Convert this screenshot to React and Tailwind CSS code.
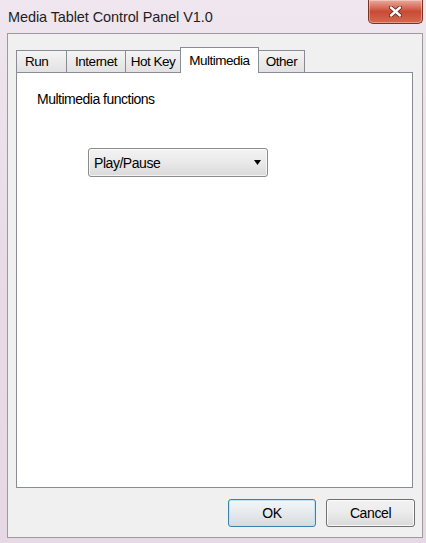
import { useState } from 'react';

const TABS = [
  { id: 'run', label: 'Run', w: 'w-[51px]', pad: 'justify-start pl-[8px]' },
  { id: 'internet', label: 'Internet', w: 'w-[60px]', pad: 'justify-center' },
  { id: 'hotkey', label: 'Hot Key', w: 'w-[56px]', pad: 'justify-center' },
  { id: 'multimedia', label: 'Multimedia', w: 'w-[79px]', pad: 'justify-center' },
  { id: 'other', label: 'Other', w: 'w-[47px]', pad: 'justify-center' },
];

// Botón cerrar estilo Aero
function CloseButton() {
  return (
    <button className="ml-auto mr-[3px] w-[55px] h-[24px] rounded-b-[5px] border border-t-0 border-[#7a3126]
      bg-gradient-to-b from-[#eba99a] via-[#c94a35] to-[#d5694f] flex items-start justify-center pt-[6px]
      shadow-[inset_0_0_0_1px_rgba(255,255,255,0.35)]">
      <svg width="13" height="11" viewBox="0 0 13 11">
        <path d="M2 1.5 L11 9.5 M11 1.5 L2 9.5" stroke="#5a1f17" strokeWidth="4" strokeLinecap="round" />
        <path d="M2 1.5 L11 9.5 M11 1.5 L2 9.5" stroke="#ffffff" strokeWidth="2.4" strokeLinecap="round" />
      </svg>
    </button>
  );
}

function Tab({ tab, activo, onClick }) {
  return (
    <div onClick={onClick}
      className={`${tab.w} ${tab.pad} flex items-center border border-b-0 border-[#898c95] -ml-px first:ml-0 cursor-default
        ${activo
          ? 'h-[26px] -mb-px bg-white relative z-10'
          : 'h-[22px] bg-gradient-to-b from-[#f4f4f4] to-[#e2e2e2]'}`}>
      <span className="text-[13.5px] leading-[16px] tracking-[-0.5px] text-black">{tab.label}</span>
    </div>
  );
}

function Combo({ valor }) {
  return (
    <div className="w-[180px] h-[29px] rounded-[3px] border border-[#8a8a8a] flex items-center pl-[5px] pr-[6px]
      bg-gradient-to-b from-[#f3f3f3] via-[#e9e9e9] to-[#dadada] shadow-[inset_0_0_0_1px_rgba(255,255,255,0.7)]">
      <span className="flex-1 text-[14px] leading-[16px] tracking-[-0.45px] text-black">{valor}</span>
      <svg width="7" height="5" viewBox="0 0 7 5">
        <path d="M0 0 H7 L3.5 5 Z" fill="#000" />
      </svg>
    </div>
  );
}

export default function App() {
  const [tabActiva, setTabActiva] = useState('multimedia');

  return (
    <div className="w-[426px] h-[543px] flex flex-col overflow-hidden bg-gradient-to-b from-[#efe6ef] via-[#e8dbe7] to-[#e6d8e4]
      font-['Liberation_Sans',Arial,sans-serif]">

      {/* Barra de título */}
      <div className="h-[33px] flex items-start shrink-0">
        <span className="ml-[8px] mt-[8px] text-[14.5px] leading-[18px] tracking-[-0.1px] text-[#1e1e1e]">
          Media Tablet Control Panel V1.0
        </span>
        <CloseButton />
      </div>

      {/* Área cliente */}
      <div className="flex-1 ml-[7px] mr-[3px] mb-[5px] border border-[#9c9a9c] bg-[#f0f0f0] flex flex-col pl-[8px] pt-[13px]">
        <div className="flex items-end h-[25px]">
          {TABS.map(t => (
            <Tab key={t.id} tab={t} activo={t.id === tabActiva} onClick={() => setTabActiva(t.id)} />
          ))}
        </div>

        <div className="w-[397px] h-[416px] border border-[#898c95] bg-white flex flex-col pl-[20px] pt-[18px]">
          <p className="text-[14px] leading-[16px] tracking-[-0.5px] text-black">Multimedia functions</p>
          <div className="mt-[41px] ml-[51px]">
            <Combo valor="Play/Pause" />
          </div>
        </div>

        <div className="mt-[11px] flex justify-end gap-[10px] pr-[7px]">
          <button className="w-[88px] h-[28px] rounded-[3px] border border-[#3c7fb1] flex items-center justify-center
            bg-gradient-to-b from-[#f4f7f9] via-[#e6eaed] to-[#d6dbe0] shadow-[inset_0_0_0_1px_#bfe3f6]
            text-[14px] leading-[16px] tracking-[-0.4px] text-black">
            OK
          </button>
          <button className="w-[89px] h-[28px] rounded-[3px] border border-[#707070] flex items-center justify-center
            bg-gradient-to-b from-[#f2f2f2] via-[#ebebeb] to-[#d9d9d9] shadow-[inset_0_0_0_1px_rgba(255,255,255,0.8)]
            text-[14px] leading-[16px] tracking-[-0.4px] text-black">
            Cancel
          </button>
        </div>
      </div>
    </div>
  );
}
